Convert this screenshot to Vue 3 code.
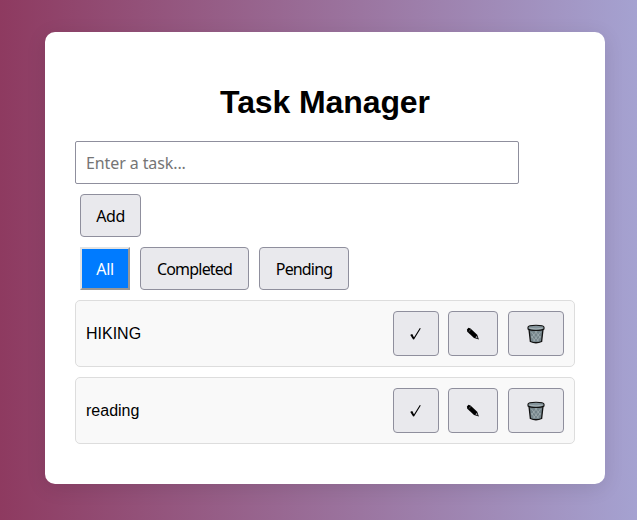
<script setup>
import { ref, computed } from 'vue'

const draft = ref('')
const filter = ref('All')
const filters = ['All', 'Completed', 'Pending']
const tasks = ref([
  { id: 1, text: 'HIKING', done: false },
  { id: 2, text: 'reading', done: false }
])

const visible = computed(() =>
  tasks.value.filter(t => filter.value === 'All' || t.done === (filter.value === 'Completed'))
)

function add() {
  const text = draft.value.trim()
  if (!text) return
  tasks.value.push({ id: Date.now(), text, done: false })
  draft.value = ''
}

function remove(id) {
  tasks.value = tasks.value.filter(t => t.id !== id)
}
</script>

<template>
  <div class="page">
    <main class="card">
      <h1>Task Manager</h1>
      <input v-model="draft" class="entry" placeholder="Enter a task..." @keyup.enter="add">
      <div class="row"><button class="btn add" @click="add"><span>Add</span></button></div>
      <div class="row">
        <button
          v-for="f in filters"
          :key="f"
          class="btn"
          :class="[f.toLowerCase(), { active: f === filter }]"
          @click="filter = f"
        ><span>{{ f }}</span></button>
      </div>
      <ul class="list">
        <li v-for="t in visible" :key="t.id" class="item">
          <span class="name">{{ t.text }}</span>
          <button class="btn icon done" @click="t.done = !t.done">
            <svg width="14" height="16" viewBox="0 0 14 16">
              <path d="M1.6 9.2 L3 8.7 L4.9 12.5 L11.3 2.2" fill="none" stroke="#000" stroke-width="1.1" />
              <path d="M2.2 9.2 L4.7 13.2" stroke="#000" stroke-width="1.3" />
            </svg>
          </button>
          <button class="btn icon edit">
            <svg width="14" height="14" viewBox="0 0 14 14">
              <path d="M.9 2.6 L2.5 .8 L4.5 1.6 L11.2 7.8 L12.9 12.6 L8 11 L1.3 4.7Z" fill="#000" />
              <path d="M2.7 4.7 L4.8 2.6" stroke="#e9e9ed" stroke-width=".4" />
              <path d="M9.4 10.3 L10.8 8.9 L11.7 11.5Z" fill="#b5b3ba" />
            </svg>
          </button>
          <button class="btn icon trash" @click="remove(t.id)">
            <svg width="18" height="20" viewBox="0 0 18 20">
              <path d="M2 5.2 L3.4 17.5 Q9 20 14.6 17.5 L16 5.2Z" fill="#74848a" stroke="#111" stroke-width="1.3" />
              <path d="M4.5 8 L11.5 17 M8 7 L13.5 14 M4.3 12 L8 17 M13.5 8 L6.5 17 M10 7 L4.5 14 M13.7 12 L10 17" stroke="#a2afb3" stroke-width=".8" />
              <path d="M1 3.2 Q1.4 1.2 9 1.2 T17 3.2 V5 Q15 6.4 9 6.4 T1 5Z" fill="#84949b" stroke="#111" stroke-width="1.1" />
              <path d="M2.6 4.2 Q9 5.8 15.4 4.2" fill="none" stroke="#a9b5b9" stroke-width="1" />
            </svg>
          </button>
        </li>
      </ul>
    </main>
  </div>
</template>

<style>
body {
  margin: 0;
}
</style>

<style scoped>
.page {
  box-sizing: border-box;
  height: 520px;
  padding: 32px 32px 36px 45px;
  background: linear-gradient(to right, #8e3a60, #a5a2d1);
  font-family: "Liberation Sans", Arial, sans-serif;
  overflow: hidden;
}
.card {
  box-sizing: border-box;
  width: 560px;
  height: 452px;
  padding: 30px;
  background: #fff;
  border-radius: 10px;
  box-shadow: 0 4px 20px rgba(0, 0, 0, 0.1);
}
h1 {
  margin: 22px 0 20px;
  font-size: 32px;
  line-height: 37px;
  letter-spacing: -0.1px;
  text-align: center;
  color: #000;
}
.entry {
  display: block;
  box-sizing: border-box;
  width: 444px;
  height: 43px;
  margin: 0;
  padding: 10px;
  border: 1px solid #8f8f9d;
  border-radius: 2px;
  background: #fff;
  font-family: "Noto Sans", sans-serif;
  font-size: 16px;
  letter-spacing: -0.1px;
}
.entry::placeholder {
  color: #757575;
  opacity: 1;
}
.row {
  display: flex;
  gap: 10px;
  margin: 10px 0 0 5px;
}
.btn {
  display: flex;
  align-items: center;
  justify-content: center;
  box-sizing: border-box;
  height: 43px;
  padding: 0;
  border: 1px solid #8f8f9d;
  border-radius: 4px;
  background: #e9e9ed;
  color: #000;
  font-family: "Noto Sans", sans-serif;
  font-size: 16px;
  letter-spacing: -0.4px;
  white-space: nowrap;
}
.add { width: 61px; }
.all { width: 50px; }
.completed {
  width: 109px;
  letter-spacing: -0.8px;
}
.pending {
  width: 90px;
  letter-spacing: -0.85px;
}
.active {
  border: 2px solid;
  border-color: #e3e3e3 #979797 #979797 #e3e3e3;
  border-radius: 0;
  background: #007bff;
  color: #fff;
}
.list {
  margin: 10px 0 0;
  padding: 0;
  list-style: none;
}
.item {
  display: flex;
  align-items: center;
  box-sizing: border-box;
  height: 67px;
  margin-bottom: 10px;
  padding: 0 10px;
  border: 1px solid #ddd;
  border-radius: 5px;
  background: #f9f9f9;
}
.name {
  flex: 1;
  font-size: 16px;
}
.icon {
  height: 45px;
}
.icon svg {
  display: block;
}
.done { width: 46px; }
.edit { width: 50px; margin-left: 9px; }
.trash { width: 56px; margin-left: 10px; }
</style>
